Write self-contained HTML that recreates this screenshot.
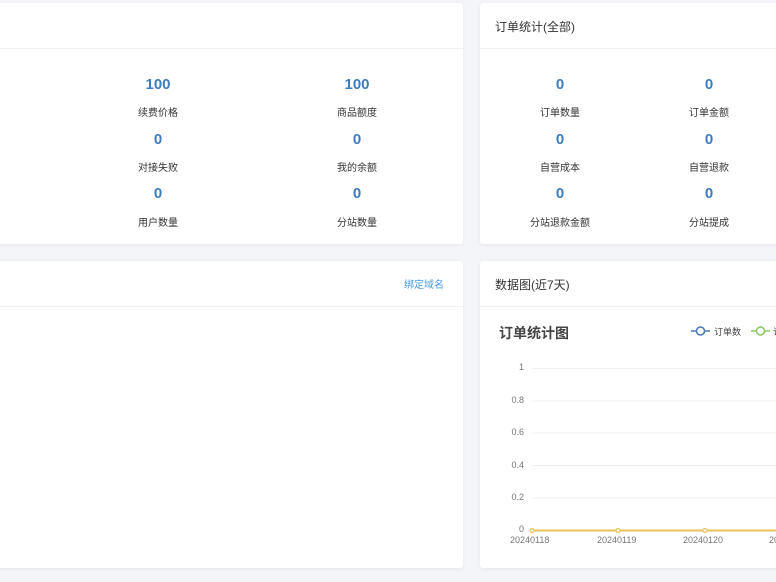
<!DOCTYPE html><html><head><meta charset="utf-8"><style>
body{margin:0;width:776px;height:582px;background:#f4f5f9;position:relative;overflow:hidden;font-family:"Liberation Sans","Noto Sans CJK SC",sans-serif;}
.card{position:absolute;background:#fff;border-radius:3px;box-shadow:0 1px 4px rgba(0,0,0,.06);}
.hd{position:absolute;left:0;right:0;top:0;height:45px;border-bottom:1px solid #eef0f3;}
.t{position:absolute;font-size:12px;color:#333;}
.n{position:absolute;width:120px;margin-left:-60px;text-align:center;font-weight:bold;font-size:15px;color:#3b7dc0;}
.l{position:absolute;width:120px;margin-left:-60px;text-align:center;font-size:10px;color:#333;}
.ax{position:absolute;font-size:9px;color:#777;}
</style></head><body>
<div class="card" style="left:-10px;top:3px;width:473px;height:241px"><div class="hd"></div></div>
<div class="card" style="left:480px;top:3px;width:310px;height:241px"><div class="hd"></div><div class="t" style="left:15px;top:15px">订单统计(全部)</div></div>
<div class="card" style="left:-10px;top:261px;width:473px;height:307px"><div class="hd"></div><div class="t" style="left:414px;top:15px;font-size:10px;color:#4a9be0">绑定域名</div></div>
<div class="card" style="left:480px;top:261px;width:310px;height:307px"><div class="hd"></div><div class="t" style="left:15px;top:15px">数据图(近7天)</div></div>

<div class="n" style="left:158px;top:76px">100</div><div class="l" style="left:158px;top:104px">续费价格</div>
<div class="n" style="left:357px;top:76px">100</div><div class="l" style="left:357px;top:104px">商品额度</div>
<div class="n" style="left:158px;top:131px">0</div><div class="l" style="left:158px;top:159px">对接失败</div>
<div class="n" style="left:357px;top:131px">0</div><div class="l" style="left:357px;top:159px">我的余额</div>
<div class="n" style="left:158px;top:185px">0</div><div class="l" style="left:158px;top:214px">用户数量</div>
<div class="n" style="left:357px;top:185px">0</div><div class="l" style="left:357px;top:214px">分站数量</div>

<div class="n" style="left:560px;top:76px">0</div><div class="l" style="left:560px;top:104px">订单数量</div>
<div class="n" style="left:709px;top:76px">0</div><div class="l" style="left:709px;top:104px">订单金额</div>
<div class="n" style="left:560px;top:131px">0</div><div class="l" style="left:560px;top:159px">自营成本</div>
<div class="n" style="left:709px;top:131px">0</div><div class="l" style="left:709px;top:159px">自营退款</div>
<div class="n" style="left:560px;top:185px">0</div><div class="l" style="left:560px;top:214px">分站退款金额</div>
<div class="n" style="left:709px;top:185px">0</div><div class="l" style="left:709px;top:214px">分站提成</div>

<div class="t" style="left:499px;top:323px;font-size:14px;font-weight:bold;color:#444">订单统计图</div>
<svg style="position:absolute;left:0;top:0" width="776" height="582">
<g stroke="#eef0f5" stroke-width="1">
<line x1="532" y1="368.5" x2="776" y2="368.5"/><line x1="532" y1="401" x2="776" y2="401"/><line x1="532" y1="433" x2="776" y2="433"/><line x1="532" y1="465.5" x2="776" y2="465.5"/><line x1="532" y1="498" x2="776" y2="498"/></g>
<line x1="532" y1="530.5" x2="776" y2="530.5" stroke="#e8c25a" stroke-width="2"/>
<g fill="#fff" stroke="#e8c25a" stroke-width="1.2"><circle cx="532" cy="530.5" r="2"/><circle cx="618" cy="530.5" r="2"/><circle cx="705" cy="530.5" r="2"/></g>
<line x1="691" y1="331" x2="710" y2="331" stroke="#4a78b8" stroke-width="1.5"/><circle cx="700.5" cy="331" r="4" fill="#fff" stroke="#4a78b8" stroke-width="1.5"/>
<line x1="751" y1="331" x2="770" y2="331" stroke="#8cc86a" stroke-width="1.5"/><circle cx="760.5" cy="331" r="4" fill="#fff" stroke="#8cc86a" stroke-width="1.5"/>
</svg>
<div class="ax" style="left:714px;top:325px;color:#444">订单数</div>
<div class="ax" style="left:773px;top:325px;color:#444">订</div>
<div class="ax" style="left:512px;top:362px;width:12px;text-align:right">1</div>
<div class="ax" style="left:504px;top:395px;width:20px;text-align:right">0.8</div>
<div class="ax" style="left:504px;top:427px;width:20px;text-align:right">0.6</div>
<div class="ax" style="left:504px;top:460px;width:20px;text-align:right">0.4</div>
<div class="ax" style="left:504px;top:492px;width:20px;text-align:right">0.2</div>
<div class="ax" style="left:504px;top:524px;width:20px;text-align:right">0</div>
<div class="ax" style="left:510px;top:535px">20240118</div>
<div class="ax" style="left:597px;top:535px">20240119</div>
<div class="ax" style="left:683px;top:535px">20240120</div>
<div class="ax" style="left:769px;top:535px">20240121</div>
</body></html>
